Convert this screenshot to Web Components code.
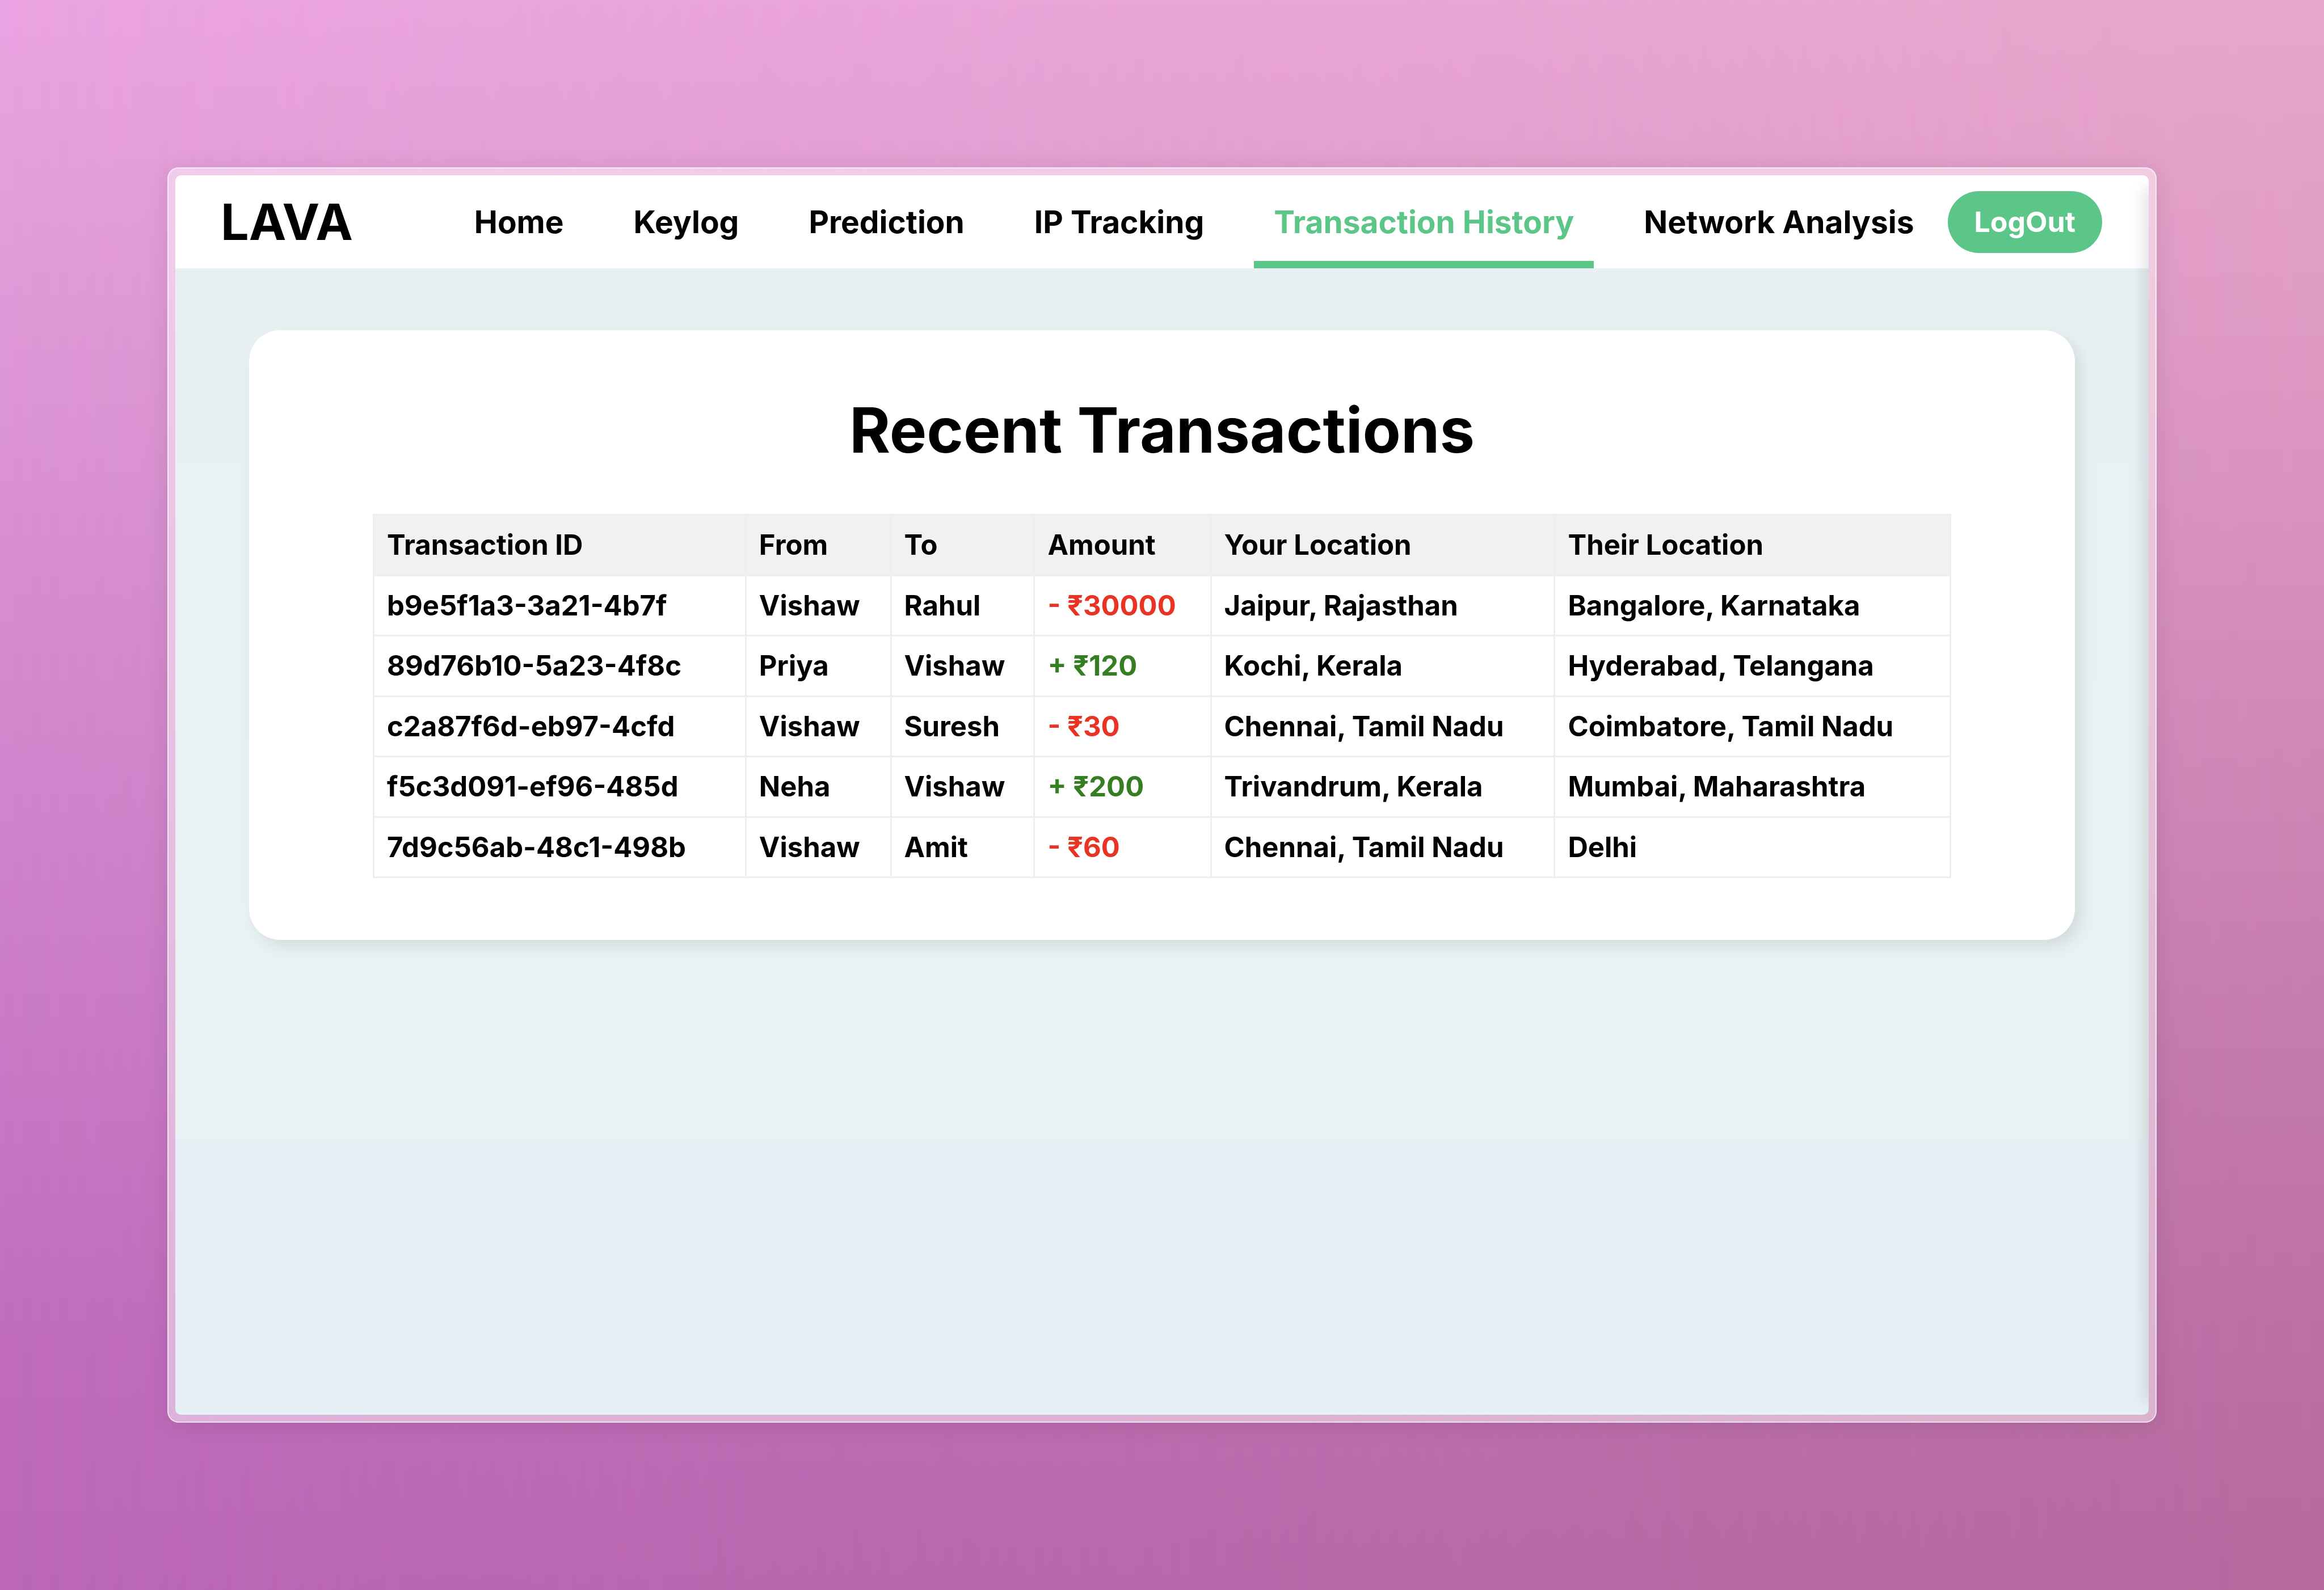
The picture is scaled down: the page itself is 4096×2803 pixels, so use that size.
<!DOCTYPE html>
<html lang="en">
<head>
<meta charset="utf-8">
<title>LAVA – Transaction History</title>
<style>
  html, body { margin: 0; height: 100%; }
  body { font-family: Inter, "Liberation Sans", sans-serif; font-weight: 700; color: #000; }
</style>
</head>
<body>
<app-backdrop>
  <app-window>
    <nav-bar slot="header">
      <nav-link href="#home">Home</nav-link>
      <nav-link href="#keylog">Keylog</nav-link>
      <nav-link href="#prediction">Prediction</nav-link>
      <nav-link href="#ip-tracking">IP Tracking</nav-link>
      <nav-link href="#transactions" active>Transaction History</nav-link>
      <nav-link href="#network">Network Analysis</nav-link>
    </nav-bar>
    <content-card heading="Recent Transactions">
      <transaction-table></transaction-table>
    </content-card>
  </app-window>
</app-backdrop>

<script>
  const define = (name, html, setup) => {
    const template = document.createElement('template');
    template.innerHTML = html;
    customElements.define(name, class extends HTMLElement {
      constructor() {
        super();
        this.attachShadow({ mode: 'open' }).append(template.content.cloneNode(true));
      }
      connectedCallback() { if (setup) setup(this, this.shadowRoot); }
    });
  };

  define('app-backdrop', `
    <style>
      :host {
        display: flex; box-sizing: border-box; min-height: 100vh; padding: 295px;
        position: relative; isolation: isolate; overflow: hidden;
        background: linear-gradient(#eba4e3, #e39edb 12%, #d890d2 32%, #ca7cc7 63%, #c06cbd 85%, #bb67b8);
      }
      :host::before {
        content: ""; position: absolute; inset: 0; z-index: -1;
        background: linear-gradient(#e7a6cb, #df9cc4 18%, #d08ab7 45%, #c47bad 65%, #bb70a4 85%, #b5699e);
        -webkit-mask-image: linear-gradient(to right, transparent, #000);
        mask-image: linear-gradient(to right, transparent, #000);
      }
    </style>
    <slot></slot>`);

  define('app-window', `
    <style>
      :host {
        display: flex; flex: 1; box-sizing: border-box; padding: 12px;
        border: 2px solid rgba(255, 255, 255, .6); border-radius: 20px;
        background: rgba(255, 255, 255, .48);
        box-shadow: 0 4px 40px rgba(0, 0, 0, .1);
      }
      .screen {
        display: flex; flex-direction: column; flex: 1; position: relative;
        overflow: hidden; border-radius: 10px;
      }
      .screen::after {
        content: ""; position: absolute; top: 22px; bottom: 22px; left: 100%; width: 60px;
        box-shadow: -11px 0 27px rgba(0, 0, 0, .1);
      }
      main {
        flex: 1; padding: 109px 130px;
        background: linear-gradient(#e8f0f4, #e8f1f3 76%, #e8eff7 76%, #e8f0f7);
      }
    </style>
    <div class="screen">
      <slot name="header"></slot>
      <main><slot></slot></main>
    </div>`);

  define('nav-bar', `
    <style>
      :host { display: flex; align-items: center; height: 164px; padding: 0 82px 0 80px; background: #fff; }
      .logo { font-size: 88px; line-height: 106px; }
      nav { display: flex; gap: 53px; margin: 0 24px 0 auto; }
      button {
        height: 109px; padding: 0 47px; border: 0; border-radius: 55px;
        background: #5cc689; color: #fff; font: inherit; font-size: 50px; line-height: 60px;
      }
    </style>
    <div class="logo">LAVA</div>
    <nav><slot></slot></nav>
    <button type="button">LogOut</button>`);

  define('nav-link', `
    <style>
      :host { display: block; }
      a {
        display: flex; align-items: center; box-sizing: border-box; height: 164px; padding: 0 35px;
        border: solid transparent; border-width: 13px 0;
        color: inherit; text-decoration: none; font-size: 55px; line-height: 66px; white-space: nowrap;
      }
      :host([active]) a { color: #5cc689; border-bottom-color: #5cc689; }
    </style>
    <a><slot></slot></a>`,
    (host, root) => { root.querySelector('a').href = host.getAttribute('href'); });

  define('content-card', `
    <style>
      :host {
        display: block; padding: 109px 218px; border-radius: 55px; background: #fff;
        box-shadow: 11px 11px 27px rgba(0, 0, 0, .09);
      }
      h1 { margin: 0 0 81px; font-size: 110px; line-height: 134px; text-align: center; }
    </style>
    <h1></h1>
    <slot></slot>`,
    (host, root) => { root.querySelector('h1').textContent = host.getAttribute('heading'); });

  const columns = ['Transaction ID', 'From', 'To', 'Amount', 'Your Location', 'Their Location'];
  const rows = [
    ['b9e5f1a3-3a21-4b7f', 'Vishaw', 'Rahul', '- ₹30000', 'Jaipur, Rajasthan', 'Bangalore, Karnataka'],
    ['89d76b10-5a23-4f8c', 'Priya', 'Vishaw', '+ ₹120', 'Kochi, Kerala', 'Hyderabad, Telangana'],
    ['c2a87f6d-eb97-4cfd', 'Vishaw', 'Suresh', '- ₹30', 'Chennai, Tamil Nadu', 'Coimbatore, Tamil Nadu'],
    ['f5c3d091-ef96-485d', 'Neha', 'Vishaw', '+ ₹200', 'Trivandrum, Kerala', 'Mumbai, Maharashtra'],
    ['7d9c56ab-48c1-498b', 'Vishaw', 'Amit', '- ₹60', 'Chennai, Tamil Nadu', 'Delhi'],
  ];

  define('transaction-table', `
    <style>
      :host { display: block; }
      table {
        width: 100%; table-layout: fixed; border-collapse: collapse;
        font-size: 49px; line-height: 60px; text-align: left; white-space: nowrap;
      }
      .id { width: 23.6%; }
      .from { width: 9.2%; }
      .to { width: 9.1%; }
      .amount { width: 11.2%; }
      .origin { width: 21.8%; }
      th, td { padding: 22px; border: 3px solid #eee; font-weight: 700; }
      th { background: #f1f1f1; }
      tbody tr:nth-child(odd) td { padding-bottom: 21px; }
      .debit { color: #e93323; }
      .credit { color: #367e22; }
    </style>
    <table>
      <colgroup><col class="id"><col class="from"><col class="to"><col class="amount"><col class="origin"><col></colgroup>
      <thead><tr></tr></thead><tbody></tbody>
    </table>`,
    (host, root) => {
      const head = root.querySelector('thead tr');
      for (const label of columns) {
        const th = document.createElement('th');
        th.scope = 'col';
        th.textContent = label;
        head.append(th);
      }
      const body = root.querySelector('tbody');
      for (const row of rows) {
        const tr = body.insertRow();
        row.forEach((value, i) => {
          const td = tr.insertCell();
          td.textContent = value;
          if (i === 3) td.className = value.startsWith('-') ? 'debit' : 'credit';
        });
      }
    });
</script>
</body>
</html>
